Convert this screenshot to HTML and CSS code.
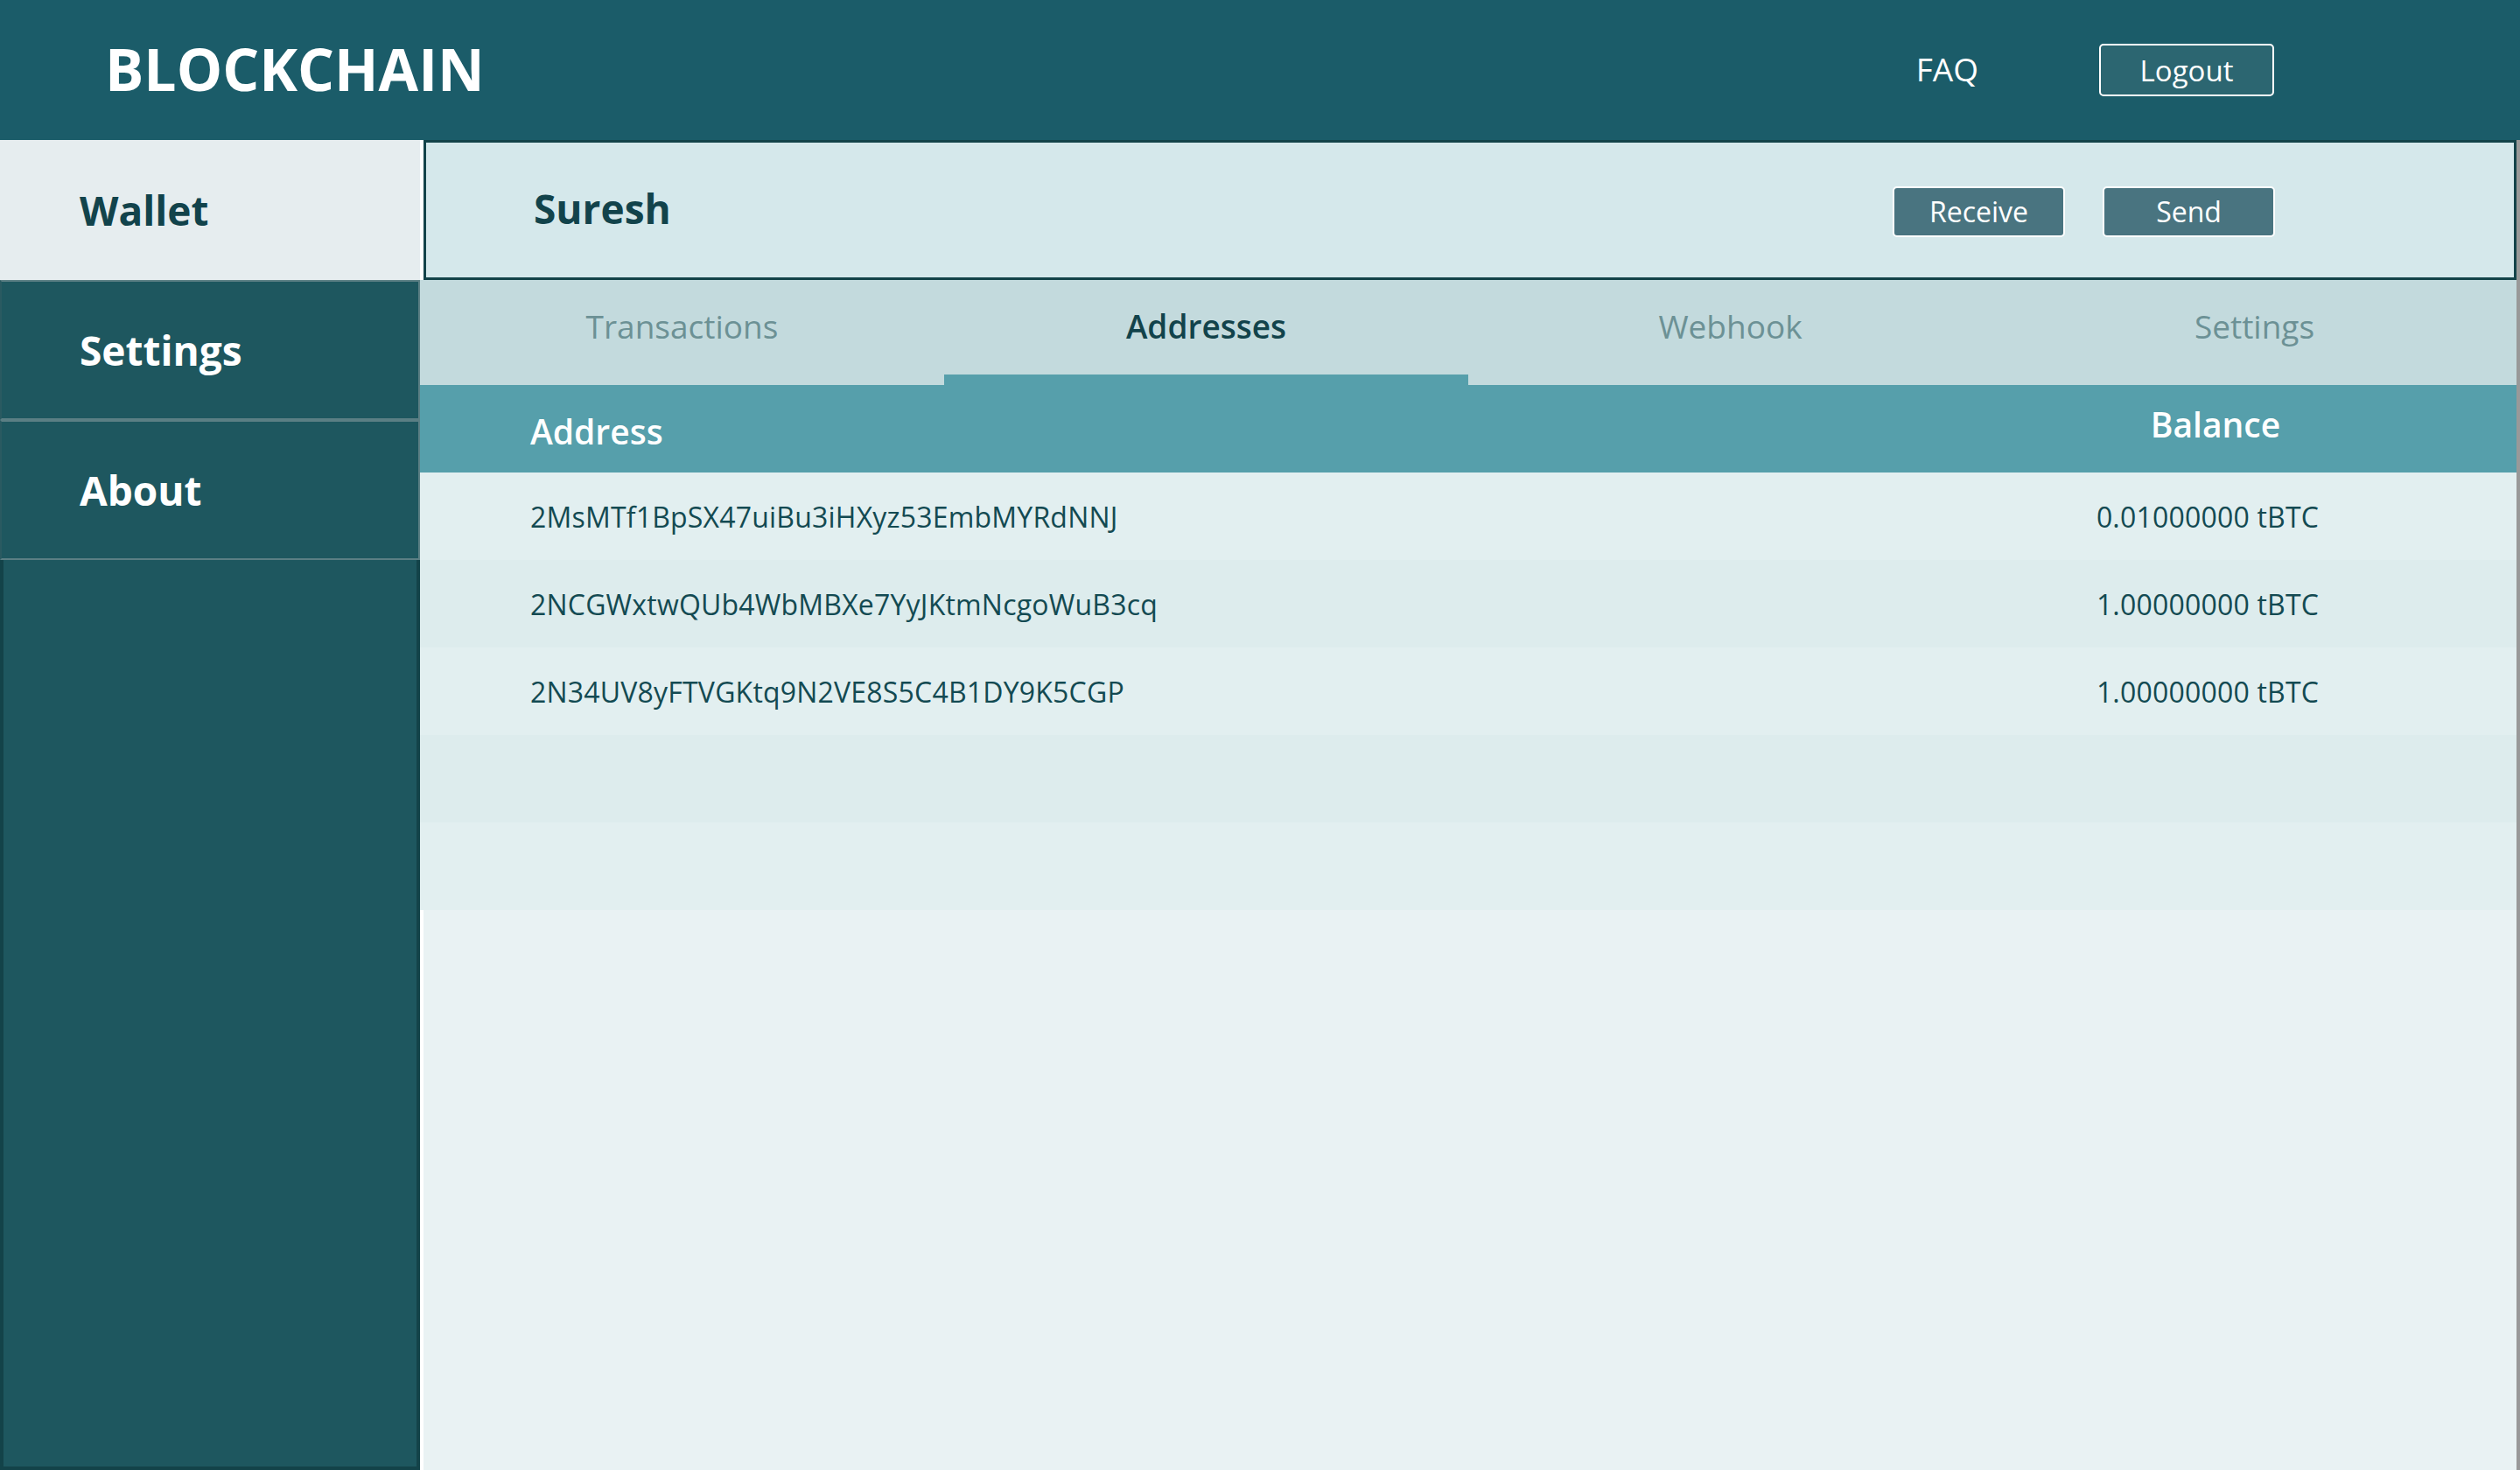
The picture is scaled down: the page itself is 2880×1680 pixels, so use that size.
FILE: index.html
```html
<!DOCTYPE html>
<html lang="en">
<head>
<meta charset="utf-8">
<title>Blockchain Wallet</title>
<link rel="stylesheet" href="styles.css">
</head>
<body>
<header class="topbar">
  <div class="brand">BLOCKCHAIN</div>
  <nav class="top-actions">
    <a class="faq" href="#">FAQ</a>
    <button class="btn btn-logout">Logout</button>
  </nav>
</header>
<div class="layout">
  <aside class="sidebar">
    <div class="side-item side-item-active">Wallet</div>
    <div class="side-item">Settings</div>
    <div class="side-item">About</div>
    <div class="side-rest"></div>
  </aside>
  <main class="main">
    <section class="wallet-card">
      <h1 class="wallet-name">Suresh</h1>
      <div class="wallet-actions">
        <button class="btn btn-action">Receive</button>
        <button class="btn btn-action">Send</button>
      </div>
    </section>
    <nav class="tabs">
      <div class="tab">Transactions</div>
      <div class="tab tab-active">Addresses</div>
      <div class="tab">Webhook</div>
      <div class="tab">Settings</div>
    </nav>
    <div class="table">
      <div class="thead">
        <div class="th th-address">Address</div>
        <div class="th th-balance">Balance</div>
      </div>
      <div class="tr tr-odd">
        <div class="td">2MsMTf1BpSX47uiBu3iHXyz53EmbMYRdNNJ</div>
        <div class="td td-balance">0.01000000 tBTC</div>
      </div>
      <div class="tr tr-even">
        <div class="td">2NCGWxtwQUb4WbMBXe7YyJKtmNcgoWuB3cq</div>
        <div class="td td-balance">1.00000000 tBTC</div>
      </div>
      <div class="tr tr-odd">
        <div class="td">2N34UV8yFTVGKtq9N2VE8S5C4B1DY9K5CGP</div>
        <div class="td td-balance">1.00000000 tBTC</div>
      </div>
      <div class="tr tr-even"></div>
      <div class="tr tr-odd"></div>
    </div>
    <div class="filler"></div>
  </main>
</div>
</body>
</html>
```
FILE: styles.css
```css
* { box-sizing: border-box; }

html, body {
  margin: 0;
  padding: 0;
  width: 2880px;
  height: 1680px;
  overflow: hidden;
  background: #ffffff;
  font-family: "Open Sans", "Noto Sans", sans-serif;
}

.topbar {
  height: 160px;
  background: #1b5c69;
  display: flex;
  align-items: center;
  justify-content: space-between;
  padding: 0 281px 0 120px;
}

.brand {
  color: #ffffff;
  font-weight: 700;
  font-size: 66px;
  line-height: 1;
  padding-bottom: 4px;
}

.top-actions {
  display: flex;
  align-items: center;
  gap: 138px;
}

.faq {
  color: #ffffff;
  text-decoration: none;
  font-size: 37px;
  line-height: 1;
  padding-bottom: 4px;
}

.btn {
  font-family: inherit;
  color: #ffffff;
  border: 2px solid #ffffff;
  border-radius: 5px;
  cursor: pointer;
  padding: 0;
  line-height: 1;
}

.btn-logout {
  width: 200px;
  height: 60px;
  background: #2c6671;
  font-size: 33px;
}

.layout {
  display: grid;
  grid-template-columns: 480px 1fr;
  height: 1520px;
}

.sidebar {
  display: flex;
  flex-direction: column;
}

.side-item {
  height: 160px;
  display: flex;
  align-items: center;
  padding-left: 89px;
  font-size: 46px;
  font-weight: 700;
  color: #ffffff;
  background: #1e575f;
  border: 2px solid #5b7f84;
  border-left-color: #2a5a61;
}

.side-item-active {
  background: #e6edef;
  color: #12434b;
  border: none;
  padding-left: 91px;
}

.side-rest {
  flex: 1;
  background: #1e575f;
  border: 4px solid #134349;
  border-top: none;
}

.main {
  display: flex;
  flex-direction: column;
  border-right: 4px solid #999999;
  background: #ffffff;
}

.wallet-card {
  height: 160px;
  margin-left: 4px;
  background: #d5e8eb;
  border: 3px solid #134349;
  display: flex;
  align-items: center;
  justify-content: space-between;
  padding: 4px 273px 0 123px;
}

.wallet-name {
  margin: 0;
  font-size: 46px;
  font-weight: 700;
  color: #12434b;
  line-height: 1;
  padding-bottom: 8px;
}

.wallet-actions {
  display: flex;
  gap: 43px;
}

.btn-action {
  width: 197px;
  height: 58px;
  background: #497480;
  font-size: 32px;
}

.tabs {
  height: 120px;
  background: #c3dadd;
  display: grid;
  grid-template-columns: repeat(4, 1fr);
}

.tab {
  display: flex;
  align-items: center;
  justify-content: center;
  font-size: 37px;
  color: #6c9195;
  border-bottom: 12px solid transparent;
  padding-bottom: 4px;
}

.tab-active {
  color: #12434b;
  font-weight: 600;
  border-bottom-color: #569fab;
}

.thead,
.tr {
  height: 100px;
  display: grid;
  grid-template-columns: 1fr 290px;
  align-items: center;
  padding: 0 208px 0 126px;
}

.thead {
  background: #569fab;
  color: #ffffff;
  font-size: 39px;
  font-weight: 600;
}

.th-address {
  padding-top: 4px;
}

.th-balance {
  text-align: center;
  padding-left: 18px;
  padding-bottom: 12px;
}

.tr {
  font-size: 32px;
  letter-spacing: 0.2px;
  color: #134a52;
}

.tr-odd { background: #e2eff0; }
.tr-even { background: #ddeced; }

.td-balance {
  text-align: center;
}

.filler {
  flex: 1;
  background: #e9f2f3;
  border-left: 4px solid #ffffff;
}
```
